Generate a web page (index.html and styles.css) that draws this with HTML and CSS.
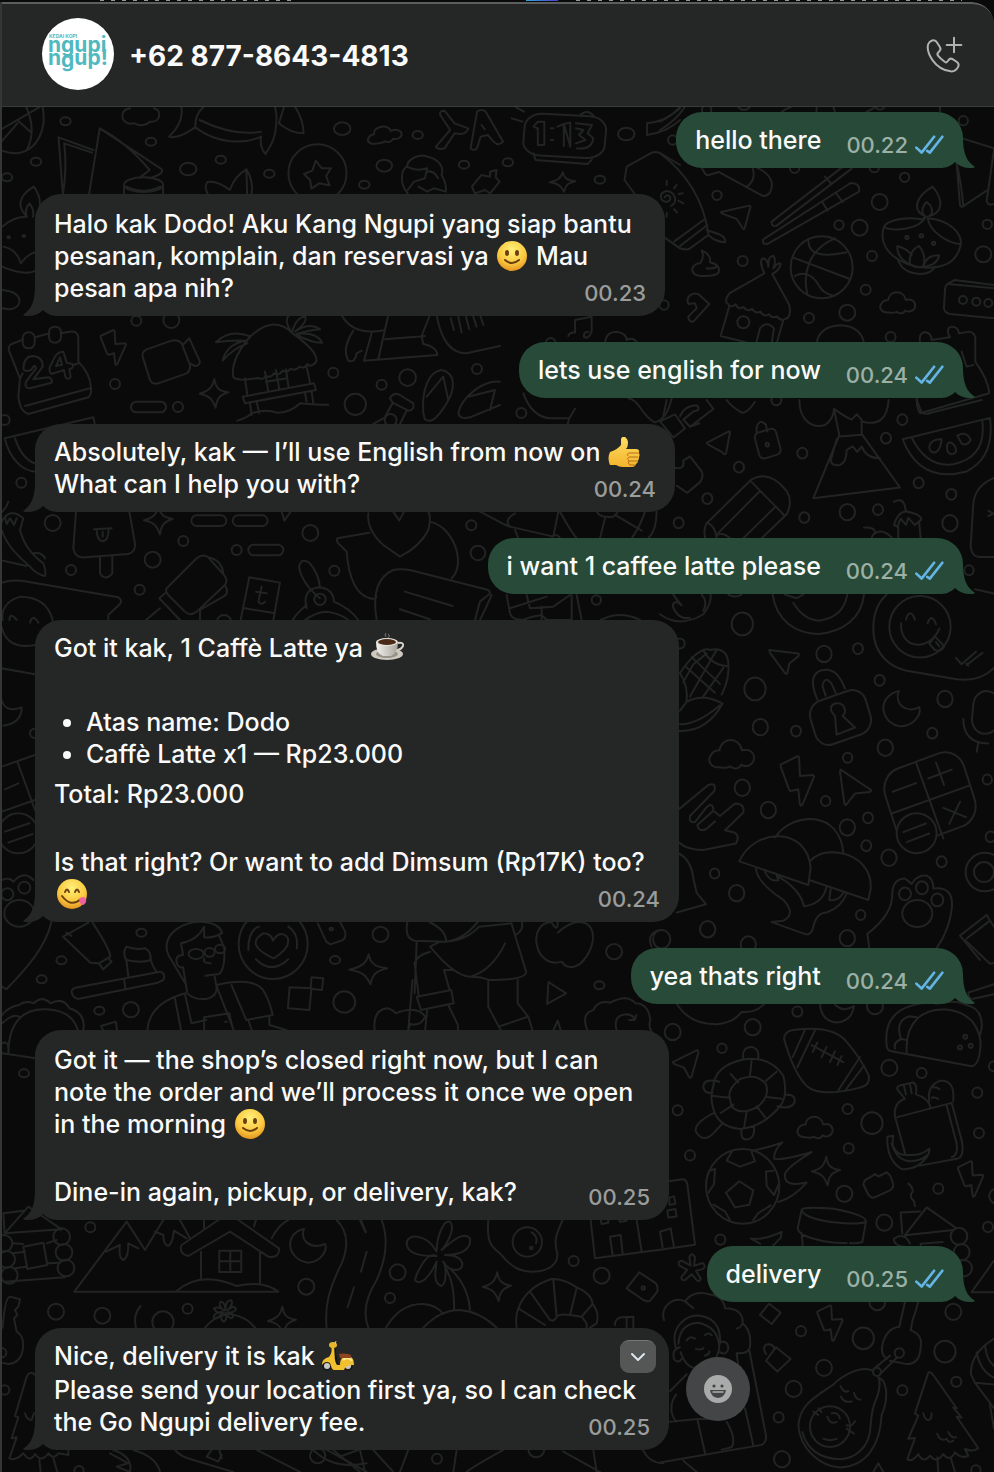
FILE: index.html
```html
<!DOCTYPE html>
<html lang="id">
<head>
<meta charset="utf-8">
<meta name="viewport" content="width=device-width, initial-scale=1">
<title>+62 877-8643-4813</title>
<link rel="stylesheet" href="styles.css">
</head>
<body>

<!-- shared shapes -->
<svg class="sprites" width="0" height="0" aria-hidden="true">
  <defs>
    <radialGradient id="face" cx="50%" cy="30%" r="75%">
      <stop offset="0" stop-color="#fff07a"/>
      <stop offset="0.6" stop-color="#fbc93f"/>
      <stop offset="1" stop-color="#e08a1c"/>
    </radialGradient>
    <linearGradient id="thumb" x1="0" y1="0" x2="0" y2="1">
      <stop offset="0" stop-color="#ffdf62"/>
      <stop offset="1" stop-color="#f3b32d"/>
    </linearGradient>
    <linearGradient id="cup" x1="0" y1="0" x2="1" y2="0">
      <stop offset="0" stop-color="#f3f1ec"/>
      <stop offset="1" stop-color="#a9a59c"/>
    </linearGradient>
  </defs>

  <symbol id="tail" viewBox="0 0 36 30">
    <path d="M12 0C12 14 9 23 0 29C1 30 3 30 5 30C11 30 16 28 20 24C25 29 30 30 36 30V0Z"/>
  </symbol>
  <symbol id="ticks" viewBox="767 403 88 60">
    <path d="M771 441L787 456L825 408M804 451L812 456L850 408"/>
  </symbol>

  <symbol id="smile" viewBox="0 0 34 30">
    <circle cx="17" cy="15" r="15" fill="url(#face)"/>
    <ellipse cx="12" cy="12" rx="2" ry="3" fill="#6b3f10"/>
    <ellipse cx="22" cy="12" rx="2" ry="3" fill="#6b3f10"/>
    <path d="M10 19Q17 25 24 19" fill="none" stroke="#6b3f10" stroke-width="2" stroke-linecap="round"/>
  </symbol>
  <symbol id="yum" viewBox="0 0 34 30">
    <circle cx="18" cy="15" r="15" fill="url(#face)"/>
    <path d="M11 13Q13 8 15 13M21 13Q23 8 25 13" fill="none" stroke="#6b3f10" stroke-width="2" stroke-linecap="round"/>
    <path d="M8 17Q17 29 27 20" fill="none" stroke="#6b3f10" stroke-width="2" stroke-linecap="round"/>
    <path d="M25 20Q29 16 32 20Q33 24 29 26Q26 26 25 20Z" fill="#f2609e"/>
  </symbol>
  <symbol id="thumbs-up" viewBox="0 0 34 30">
    <path d="M3 15Q10 13 14 8L14 2Q15 -1 18 0Q21 2 21 6Q21 10 19 12H29Q33 12 32 16Q33 18 32 20Q32 22 31 24Q31 26 29 27Q28 30 25 30H16Q12 30 9 28L3 28Q0 21 3 15Z" fill="url(#thumb)"/>
    <path d="M32 16H22Q19 17 21 19M31 20H22Q19 21 22 24M31 24H22Q20 26 23 28L28 28" fill="none" stroke="#b96f17" stroke-width="1"/>
  </symbol>
  <symbol id="coffee" viewBox="0 0 34 30">
    <path d="M16 4Q14 2 16 0M18 5Q21 3 18 1" fill="none" stroke="#777" stroke-width="1"/>
    <ellipse cx="17" cy="21" rx="16" ry="6" fill="#cfcac0"/>
    <ellipse cx="17" cy="21" rx="11" ry="4" fill="#96928a"/>
    <path d="M28 10Q34 9 33 13Q31 17 26 17" fill="none" stroke="#d4d0c8" stroke-width="2"/>
    <path d="M6 9Q6 21 13 23H21Q28 20 28 9Z" fill="url(#cup)"/>
    <ellipse cx="17" cy="9" rx="11" ry="4" fill="#e7e3db"/>
    <ellipse cx="17" cy="9" rx="9" ry="3" fill="#4a2a17"/>
  </symbol>
  <symbol id="scooter" viewBox="0 0 34 30">
    <path d="M12 5L15 24" stroke="#151515" stroke-width="4"/>
    <circle cx="6" cy="25" r="5" fill="#1b1b1b"/>
    <circle cx="6" cy="25" r="3" fill="#c9c9c9"/>
    <circle cx="27" cy="25" r="5" fill="#1b1b1b"/>
    <circle cx="27" cy="25" r="3" fill="#c9c9c9"/>
    <path d="M10 5L13 6C14 13 13 20 16 24H19C19 18 22 15 26 15C31 15 33 18 33 24C29 24 24 25 23 29H13C11 29 10 25 9 22C6 20 3 21 1 24C1 19 4 17 8 16C11 12 11 9 10 5Z" fill="#f0c02f"/>
    <path d="M22 19C25 16 29 17 31 20" fill="none" stroke="#ffe98c" stroke-width="2"/>
    <path d="M18 13Q23 12 27 13L30 14V17L19 17Z" fill="#8d4422"/>
    <ellipse cx="12" cy="4" rx="4" ry="3" fill="#e8b62b"/>
    <path d="M14 3L15 0" stroke="#ccc" stroke-width="1"/>
  </symbol>

  <symbol id="cloud" class="doodle" viewBox="0 0 120 80" overflow="visible">
    <path d="M30 74C8 76 0 58 10 46C16 36 26 36 30 36C34 6 78 4 84 36C104 30 116 44 112 58C108 72 90 74 82 68C76 80 62 78 56 72C48 76 40 76 30 74Z"/>
  </symbol>
  <symbol id="spark" class="doodle" viewBox="0 0 90 90" overflow="visible">
    <path d="M46 2C50 28 60 38 88 42C62 50 54 60 50 88C40 62 32 52 2 46C30 38 40 28 46 2Z"/>
  </symbol>
  <symbol id="bolt" class="doodle" viewBox="0 0 80 110" overflow="visible">
    <path d="M2 20L40 2Q44 2 44 6L46 44L76 42Q79 44 77 48L52 104Q48 110 46 104L42 72L26 76Q22 76 21 72L2 24Z"/>
  </symbol>
</svg>

<div class="backdrop"></div>

<div class="window">
  <header class="topbar">
    <svg class="avatar" viewBox="0 0 72 72" role="img" aria-label="Kedai Kopi Ngupi Ngupi">
      <circle cx="36" cy="36" r="36" fill="#fff"/>
      <g fill="#4fb9bf" font-family="Inter, sans-serif" font-weight="700">
        <text x="7" y="20" font-size="5">KEDAI KOPI</text>
        <text x="6" y="34" font-size="21">ngupi</text>
        <text x="6" y="47" font-size="21">n<tspan dy="2">g</tspan><tspan dy="-2">up!</tspan></text>
      </g>
    </svg>
    <h1 class="contact">+62 877-8643-4813</h1>
    <button class="call" type="button" aria-label="Call">
      <svg viewBox="798 105 111 111">
        <path d="M803 138C803 126 812 118 821 118C826 118 829 121 832 126L840 139C843 144 841 149 836 153C831 157 831 160 834 164C840 172 848 178 855 183C859 186 862 183 865 178C869 172 874 172 879 175L891 183C896 187 897 191 895 196C890 207 882 212 872 211C850 208 830 195 818 178C808 164 803 150 803 138Z"/>
        <path d="M882 110V154M860 132H904"/>
      </svg>
    </button>
  </header>

  <main class="chat">
    <!-- doodle wallpaper -->
    <svg class="wallpaper doodle" viewBox="2 107 992 1365" preserveAspectRatio="xMinYMin slice" aria-hidden="true">
      <!-- top left -->
      <g transform="translate(0 100) scale(.4337 .3333)">
        <path d="M98 20C108 80 90 150 40 160Q20 160 0 150M60 20Q85 90 62 150M0 90L90 22M0 130L40 70M40 60L70 95"/>
        <circle cx="151" cy="64" r="12"/><circle cx="348" cy="125" r="12"/><circle cx="83" cy="185" r="12"/>
        <circle cx="16" cy="232" r="12"/><circle cx="434" cy="207" r="19"/><circle cx="509" cy="179" r="12"/>
        <circle cx="789" cy="86" r="19"/><circle cx="963" cy="105" r="12"/><circle cx="886" cy="197" r="18"/>
        <circle cx="621" cy="221" r="12"/><circle cx="840" cy="254" r="12"/><circle cx="1070" cy="194" r="12"/>
        <circle cx="1171" cy="187" r="12"/><circle cx="1383" cy="239" r="12"/><circle cx="1444" cy="102" r="19"/>
        <path d="M300 25C270 30 280 80 310 70C320 80 340 75 345 65C370 70 375 30 355 25"/>
        <path d="M205 285L230 85L370 205Q380 215 365 225L345 235M230 85Q290 125 345 210L325 230M145 285L135 112L215 150M145 285Q155 200 148 130L212 158"/>
        <ellipse cx="331" cy="254" rx="45" ry="22"/>
        <path d="M286 254V285M376 254V285M292 260Q330 285 370 260"/>
        <path d="M418 20Q425 65 390 110Q410 118 450 82C500 130 560 135 602 110Q598 140 612 162Q635 120 636 82Q640 50 634 20M450 82Q450 40 470 20M460 60Q540 110 602 95M680 20Q700 60 700 100Q670 100 643 70L655 20"/>
        <path d="M480 285Q470 260 478 246Q500 240 530 270Q540 230 568 208Q585 240 580 285M568 208L570 285"/>
        <ellipse cx="732" cy="220" rx="67" ry="87"/>
        <path d="M728 182L742 205L763 205L752 228L760 256L736 250L718 266L715 240L701 222L720 212Z"/>
        <use href="#cloud" x="840" y="60" width="90" height="80" transform="rotate(-14 885 100)"/>
        <path d="M940 280C920 250 925 210 938 200C940 175 970 160 985 170C1010 175 1025 200 1018 225Q1030 250 1028 275L1000 265L985 275L965 260M938 200Q960 215 985 205L980 235L955 245L940 270M985 215Q1000 210 1010 235"/>
        <path d="M1005 140L1038 90L1015 45Q1012 32 1025 32L1048 70L1080 85Q1075 108 1048 100L1025 145Q1010 150 1005 140ZM1085 145L1100 35Q1110 25 1120 35L1160 125Q1150 140 1138 125L1125 105L1108 110L1100 145Q1092 155 1085 145ZM1110 75L1118 88"/>
        <rect x="1208" y="45" width="188" height="125" rx="40" transform="rotate(4 1300 108)"/>
        <path d="M1230 160L1235 180L1355 192L1365 178M1338 45Q1355 25 1370 50M1180 55L1205 65M1190 22L1208 35"/>
        <path d="M1240 135V85L1230 80L1240 65H1255V135ZM1270 85h6M1270 120h6M1300 138V72L1285 80M1300 72L1315 68V140ZM1328 70L1365 75L1355 100L1368 115Q1365 150 1330 145M1328 85L1345 90L1335 105L1350 120L1328 130"/>
        <path d="M1095 280L1088 260L1110 225L1130 230V215L1145 210L1143 232L1152 245L1130 280L1118 270Z"/>
        <use href="#spark" x="1266" y="210" width="62" height="72"/>
        <path d="M1440 240L1445 200L1500 160Q1515 150 1530 165L1568 195M1440 240L1465 285M1492 70Q1535 65 1568 25M1492 70V105Q1540 95 1568 60"/>
        <path d="M62 350C40 320 40 290 78 260Q100 300 88 340M62 350Q55 330 68 310Q80 330 76 350M5 380Q30 350 62 350M5 500Q60 530 85 510"/>
        <circle cx="20" cy="412" r="3"/><circle cx="55" cy="408" r="3"/>
        <path d="M8 440Q40 450 48 490Q65 460 85 455M5 570Q45 575 45 605Q40 635 5 625"/>
      </g>

      <!-- top right -->
      <g transform="translate(660 0) scale(.3333)">
        <circle cx="140" cy="330" r="14"/><circle cx="910" cy="362" r="14"/><circle cx="404" cy="505" r="14"/>
        <circle cx="643" cy="503" r="14"/><circle cx="734" cy="532" r="14"/><circle cx="171" cy="586" r="14"/>
        <circle cx="659" cy="606" r="24"/><circle cx="537" cy="675" r="14"/><circle cx="599" cy="683" r="24"/>
        <circle cx="982" cy="673" r="14"/><circle cx="248" cy="783" r="15"/><circle cx="636" cy="768" r="15"/>
        <circle cx="970" cy="763" r="24"/><circle cx="617" cy="869" r="15"/><circle cx="562" cy="938" r="24"/>
        <circle cx="447" cy="954" r="15"/><circle cx="692" cy="1011" r="15"/><circle cx="12" cy="915" r="14"/>
        <circle cx="38" cy="420" r="14"/><circle cx="252" cy="310" r="20"/><circle cx="660" cy="315" r="14"/>
        <path d="M0 390Q50 360 75 320M0 365Q40 345 60 320M365 336Q380 325 395 320M470 320V336M520 320L525 336M620 336L650 320M840 320V336"/>
        <path d="M0 460C80 520 130 600 145 700M14 592q8-12 16-2q4 14-12 16q-20-4-14-24q16-18 36 0q14 24-6 36M20 555V543M42 565L50 555M56 582L68 580M55 602L70 610M42 628L52 638M20 638V650"/>
        <path d="M10 710L60 745Q80 752 90 745L145 705Q165 725 195 727Q200 712 175 702L140 690M42 725L135 657M60 738L142 675"/>
        <path d="M183 636L268 617Q272 617 271 622L254 685Q251 690 248 685L230 657L185 640Z"/>
        <path d="M125 503L136 522Q140 527 146 525L176 516L308 588Q335 590 336 550Q330 520 290 503M278 505Q290 540 258 562"/>
        <path d="M335 665L545 503M350 677L575 506M335 665Q335 682 350 677M495 530L515 552M310 718L572 549Q602 550 597 575L320 733Q305 732 310 718ZM488 608L503 632M530 582L548 606"/>
        <path d="M797 650C752 630 770 588 818 560C852 600 850 640 803 650M797 650C782 640 785 620 800 606C820 620 822 645 803 650"/>
        <path d="M797 650Q790 660 780 657C720 650 680 665 672 680C690 697 780 690 797 650M803 655C810 695 860 728 903 733M803 655C870 660 905 700 903 733C890 790 850 803 800 803C720 800 650 750 672 680"/>
        <circle cx="741" cy="712" r="5"/><circle cx="784" cy="707" r="5"/><circle cx="821" cy="730" r="5"/>
        <path d="M750 793Q710 775 712 738Q740 745 755 765M750 793Q745 755 777 738Q800 765 790 798M790 798Q775 808 750 793M790 798Q800 765 838 766Q830 798 790 800M715 783Q730 820 780 822Q815 822 825 800"/>
        <circle cx="485" cy="802" r="93"/>
        <path d="M400 773L570 837M445 722C445 765 490 772 560 757M525 715C440 750 428 830 443 886M405 828C440 808 465 835 480 862Q490 880 522 888"/>
        <path d="M125 752Q155 765 150 787Q182 795 176 817Q170 829 130 828Q95 828 97 805Q105 790 120 790Q135 770 125 752M140 805Q160 808 172 800"/>
        <path d="M313 820L208 880Q190 905 205 913q10 12 22 0q8 18 24 8q10 16 26 6q10 16 24 8q12 18 26 8q10 14 24 6q12 16 24 8Q395 955 388 915L337 822M313 820Q295 780 310 775Q325 780 325 800Q325 765 340 768Q350 780 340 805Q355 785 362 792Q360 810 337 822M208 918L182 1008L290 1035M370 960L350 1030M290 1025L300 985Q320 960 342 985L335 1030"/>
        <circle cx="250" cy="967" r="18"/>
        <path d="M82 900Q90 875 115 882L148 912L100 965Q85 965 85 950L110 925L105 910L85 912Z"/>
        <use href="#cloud" x="655" y="864" width="118" height="80"/>
        <path d="M1002 855L885 840L865 850Q855 855 855 870L852 925Q855 940 870 942L1002 955M865 852L1002 865"/>
        <circle cx="909" cy="900" r="12"/><circle cx="949" cy="905" r="12"/><circle cx="985" cy="909" r="12"/>
        <path d="M470 1028Q480 978 542 976Q600 978 612 1028M780 1028Q775 1000 795 996Q815 1000 815 1020L870 1012Q855 985 875 980Q895 980 897 1000L930 995Q945 1000 946 1015V1085Q985 1140 988 1180L780 1240Q770 1225 770 1195M905 1055L920 1100L940 1095"/>
        <path d="M890 410L1002 445M890 490L900 615Q905 625 915 615L980 572M1002 450L980 605Q985 618 1002 612M893 500Q905 560 910 615"/>
      </g>

      <!-- left, calendar to price tag -->
      <g transform="translate(0 300) scale(.3333)">
        <circle cx="409" cy="62" r="15"/><circle cx="514" cy="60" r="24"/><circle cx="345" cy="252" r="15"/>
        <circle cx="534" cy="321" r="15"/><circle cx="1000" cy="218" r="15"/><circle cx="1145" cy="254" r="15"/>
        <circle cx="1223" cy="233" r="25"/><circle cx="1066" cy="313" r="32"/><circle cx="1431" cy="207" r="15"/>
        <circle cx="14" cy="360" r="15"/><circle cx="64" cy="548" r="15"/><circle cx="158" cy="669" r="24"/>
        <circle cx="213" cy="810" r="15"/><circle cx="458" cy="779" r="24"/><circle cx="550" cy="723" r="15"/>
        <circle cx="710" cy="750" r="15"/><circle cx="931" cy="699" r="24"/><circle cx="1003" cy="812" r="15"/>
        <circle cx="1414" cy="676" r="15"/><circle cx="1434" cy="759" r="22"/><circle cx="419" cy="869" r="15"/>
        <circle cx="672" cy="967" r="22"/>
        <path d="M70 118L35 132Q25 138 26 150L60 235L55 290Q60 335 85 342L265 292Q275 285 273 262Q270 220 235 185V110Q230 92 210 95L182 100M105 112L148 100M75 318L270 265M62 232L68 220M235 190L222 195"/>
        <rect x="68" y="97" width="36" height="48" rx="17"/><rect x="147" y="80" width="36" height="48" rx="17"/>
        <path d="M70 205Q72 168 100 168Q130 172 128 200L100 238L145 232Q158 235 155 248L90 265Q72 265 78 245L108 205Q105 190 95 208Q75 220 70 205ZM165 170Q175 155 190 155L200 188L218 192Q222 205 208 208L212 232Q202 242 196 230L192 210L155 222Q145 215 150 200ZM180 172L168 198L186 194Z"/>
        <use href="#bolt" x="300" y="88" width="80" height="110"/>
        <path d="M428 170Q425 155 440 148L515 122Q535 118 545 130L570 195Q572 212 560 220L475 250Q458 255 450 240ZM548 135L568 115L600 185Q598 198 585 198L570 190"/>
        <path d="M752 108Q790 75 815 74Q850 72 875 98Q920 130 940 155Q958 185 942 192q-12 10-20 0q-8 16-24 8q-10 14-26 6q-10 14-24 6q-10 16-26 8q-10 16-24 8q-10 14-24 6Q715 245 700 232Q690 180 752 108M752 110Q690 85 648 127Q690 120 740 122Q680 130 668 182Q700 145 742 130M875 98Q850 60 868 45M875 98Q890 50 915 50Q925 65 885 95Q930 65 960 88Q930 90 890 102Q950 95 967 128Q940 130 890 105M728 290L942 250L948 270L735 310ZM735 235L742 285M920 200L930 248M795 215L805 275M828 210L838 268M858 208L866 262M798 245L862 235M750 310L755 345M770 305L778 340M915 278L920 305M935 275L940 308M712 362Q740 355 755 340Q800 325 830 338Q870 340 900 310Q940 315 985 314"/>
        <use href="#spark" x="597" y="235" width="90" height="90"/>
        <rect x="393" y="305" width="105" height="32" rx="16"/><rect x="574" y="646" width="105" height="32" rx="16"/>
        <rect x="698" y="646" width="105" height="32" rx="16"/><rect x="745" y="734" width="105" height="32" rx="16"/>
        <path d="M1025 45Q1060 110 1155 90M1165 45L1135 178M1060 92Q1025 145 1045 182Q1065 190 1070 160L1085 152M1115 100L1092 182L1312 165Q1310 140 1270 132L1265 108L1290 45M1155 118L1275 108M1310 45Q1330 160 1400 160L1500 138M1352 55L1362 90M1375 50L1385 98M1398 50L1408 88M1420 50L1430 80M1442 50L1450 75"/>
        <path d="M1170 295Q1180 275 1200 285L1240 310Q1245 330 1225 332L1178 308ZM1178 310L1155 350M1220 332L1200 372M1120 372L1155 352"/>
        <circle cx="1172" cy="360" r="18"/>
        <path d="M1270 340C1265 270 1285 215 1325 210C1370 220 1365 270 1340 310C1310 360 1290 370 1275 358ZM1280 290L1330 230L1345 300M1375 340C1385 290 1450 240 1500 245M1375 340Q1380 360 1410 352L1500 315M1405 290L1485 270L1470 330"/>
        <path d="M14 415L280 352L285 375M14 415C30 480 70 515 110 515M45 415C60 460 85 485 110 492"/>
        <path d="M0 640Q20 625 25 605M5 665Q30 620 70 655L60 690Q75 750 130 790Q140 820 135 828Q110 825 85 795Q20 740 5 690M15 650L20 672L30 655L42 675L50 655M100 760Q125 755 135 775M0 780L80 798"/>
        <path d="M228 635L220 745Q225 775 255 772L385 762Q408 755 405 730L388 635M300 772V820Q315 845 337 820V768M282 688L335 685M290 688Q290 722 308 724Q326 722 326 686M308 695V710"/>
        <use href="#spark" x="430" y="615" width="90" height="90"/>
        <path d="M0 850Q30 838 70 843L355 892Q368 900 360 912L325 945V960"/>
        <path d="M8 960Q0 910 60 890Q140 890 158 960Q155 1010 120 1035M28 960Q30 935 50 960M90 968Q98 940 115 968"/>
        <path d="M500 865L590 775Q608 760 625 772L672 825Q685 840 675 855L590 935Q570 950 555 935L505 885Q495 875 500 865ZM478 895L495 880M478 895L540 960M625 772Q665 780 670 820M675 855Q690 880 670 890L600 930V960M438 960L480 925"/>
        <path d="M748 832L840 848L820 960M748 832L722 960M735 925L825 940M785 860L775 905Q785 918 795 905M768 875L800 880"/>
        <path d="M960 895Q905 850 897 800Q905 770 930 790Q955 820 960 860M920 925Q905 870 955 862Q1000 865 1002 905Q1050 925 1075 960M920 915Q890 940 878 960M915 960Q950 935 980 935Q1020 940 1045 960"/>
        <circle cx="960" cy="898" r="17"/>
        <path d="M1105 640Q1100 690 1150 735L1200 770Q1260 740 1285 690Q1295 650 1285 635M1180 635L1198 662L1212 635M1108 698L1012 715Q1008 722 1015 730L1040 755Q1050 880 1110 895Q1125 900 1130 890M1290 665C1360 680 1400 790 1355 835M1130 960Q1110 840 1180 810Q1200 805 1230 810L1465 870Q1475 880 1465 885L1440 905L1425 960M1215 875L1358 918M1200 928L1290 958"/>
        <path d="M845 635L853 662L872 635"/>
      </g>

      <!-- middle -->
      <g transform="translate(480 330) scale(.3333)">
        <circle cx="124" cy="249" r="15"/><circle cx="212" cy="38" r="14"/><circle cx="349" cy="810" r="14"/>
        <path d="M265 18Q270 5 285 8V-30L335-40V5Q325 30 312 20Q310 5 325 5M375 36Q380 5 410 5Q440 10 440 30Q460 20 470 36"/>
        <path d="M130 190Q155 260 210 265H268L285 236M268 265L262 285M445 205C480 210 485 260 525 277Q560 270 575 205"/>
        <path d="M0 545C50 570 80 590 90 590Q70 570 105 550M90 590L220 620L235 545M105 600L115 625M240 545Q270 600 290 625M350 545Q360 565 400 560L412 548M375 565L360 625M405 555L485 602M495 545Q480 590 455 625M530 545Q530 600 505 625M215 620Q235 610 240 625"/>
        <path d="M80 795L90 850Q95 870 130 870Q150 860 185 855L200 870H275V795M90 835L200 800M140 795L150 835L220 830L270 795M185 830V870M290 795L305 870M0 870Q20 830 35 795M362 870Q420 840 480 870"/>
      </g>

      <!-- right, volcano to paw -->
      <g transform="translate(660 400) scale(.3333 .3571)">
        <circle cx="727" cy="55" r="15"/><circle cx="678" cy="107" r="15"/><circle cx="427" cy="149" r="15"/>
        <circle cx="237" cy="188" r="15"/><circle cx="142" cy="276" r="15"/><circle cx="56" cy="344" r="15"/>
        <circle cx="433" cy="329" r="15"/><circle cx="562" cy="314" r="23"/><circle cx="654" cy="307" r="15"/>
        <circle cx="776" cy="232" r="15"/><circle cx="874" cy="264" r="15"/><circle cx="870" cy="345" r="23"/>
        <circle cx="927" cy="477" r="14"/><circle cx="349" cy="0" r="15"/><circle cx="247" cy="627" r="32"/>
        <circle cx="492" cy="711" r="23"/><circle cx="594" cy="696" r="15"/><circle cx="285" cy="809" r="32"/>
        <circle cx="659" cy="785" r="15"/><circle cx="855" cy="837" r="23"/><circle cx="301" cy="916" r="23"/>
        <circle cx="408" cy="927" r="15"/><circle cx="817" cy="933" r="15"/><circle cx="676" cy="974" r="23"/>
        <circle cx="563" cy="1002" r="14"/><circle cx="982" cy="1063" r="14"/><circle cx="247" cy="1086" r="23"/>
        <circle cx="497" cy="1123" r="14"/><circle cx="325" cy="1148" r="23"/><circle cx="624" cy="1170" r="15"/>
        <circle cx="562" cy="1197" r="23"/><circle cx="619" cy="1248" r="15"/><circle cx="687" cy="1282" r="23"/>
        <circle cx="845" cy="1293" r="15"/><circle cx="992" cy="1223" r="15"/><circle cx="164" cy="1326" r="14"/>
        <circle cx="230" cy="1381" r="23"/><circle cx="602" cy="1442" r="14"/><circle cx="143" cy="1482" r="23"/>
        <circle cx="562" cy="1507" r="23"/><circle cx="265" cy="1525" r="23"/><circle cx="60" cy="682" r="14"/>
        <circle cx="5" cy="1510" r="26"/>
        <path d="M0 60L40 105L75 80L45 40L0 60M20 0L10 45M140 120L208 87Q212 92 208 100L198 150Q192 155 185 145L145 125ZM90 75L160 25L140 0M60 45Q75 15 110 15Q125 28 100 32L70 55L90 75L118 65M45 190Q75 195 70 170L90 158L125 200Q132 215 120 230L82 260L50 240"/>
        <rect x="290" y="85" width="66" height="75" rx="14" transform="rotate(-16 322 122)"/>
        <circle cx="322" cy="125" r="5"/>
        <path d="M290 95V75Q300 50 318 70L322 88M200 0Q215 20 245 35Q260 40 285 5"/>
        <path d="M418 0C418 60 460 80 495 70Q520 55 522 25L538 98L460 275L720 245L605 95V55L590 40L575 55Q560 50 522 25M605 60Q680 80 686 0M538 102L605 97M530 110L512 170Q515 185 540 182Q560 175 560 140L578 130L592 145L605 130Q620 165 660 163"/>
        <path d="M770 0L785 35Q800 42 815 35L965 0"/>
        <path d="M728 110L990 50Q1005 160 920 200Q780 235 728 110ZM755 105Q800 190 880 180Q980 160 967 60M808 130Q815 108 845 110Q840 148 820 147Q808 145 808 130ZM862 125Q870 110 885 130Q895 150 875 152Q858 150 862 125ZM892 100Q920 85 932 112Q920 130 905 122Z"/>
        <path d="M135 385Q130 360 140 345L275 222Q330 195 380 255Q400 285 380 320L305 387M275 230L375 325M300 255L175 372M345 300L250 387M145 345Q165 355 170 385M170 378Q190 370 210 387"/>
        <path d="M702 285Q735 270 737 312M702 350Q715 310 740 312Q785 320 784 335L765 350L745 330L738 350L722 332L712 355ZM715 355V387M778 345L782 387M612 357Q645 355 645 372Q670 360 695 385M635 387Q640 372 650 372"/>
        <path d="M1002 218Q945 240 940 290L932 410Q935 440 960 440H1002M985 310L1000 318L985 325"/>
        <path d="M0 600Q60 640 130 600Q155 570 152 545M40 545Q50 560 65 575L50 565Q30 570 45 590Q60 615 90 610M125 545Q145 565 130 590M205 545Q225 555 245 545"/>
        <path d="M338 545C350 620 410 655 475 655C550 650 605 610 612 545M400 568Q430 615 475 618Q550 610 562 545M375 545L410 555L430 545"/>
        <path d="M680 545C650 570 640 600 640 640C640 720 700 750 740 758L890 782Q960 790 1002 750M945 530L1002 542"/>
        <ellipse cx="780" cy="635" rx="92" ry="86"/>
        <path d="M738 615Q750 580 765 615M803 625Q815 595 828 628M723 625C720 700 810 705 838 640M808 683L825 662L853 690Q840 708 825 700ZM828 678L838 690M888 722L905 740L948 705M920 742L968 708M925 744L920 738"/>
        <path d="M60 765C90 720 130 690 150 700Q200 690 205 735Q210 780 185 825M130 700Q150 740 200 745M95 720L180 795M75 745L165 820M70 790L100 740L140 710M90 830L145 740L170 700M130 830L190 750M60 765Q85 800 80 845L60 870M80 845Q130 820 188 850Q140 930 58 927M60 908Q110 910 180 855"/>
        <path d="M328 700L415 710Q420 715 412 720L388 738L382 765Q378 770 373 762L330 708Z"/>
        <rect x="455" y="825" width="174" height="128" rx="42" transform="rotate(-18 542 890)"/>
        <path d="M472 838Q440 770 485 757Q530 745 555 808M497 828L487 800Q495 770 515 795L527 820M525 885Q500 860 525 850Q555 845 555 875L548 885L585 917L530 937Z"/>
        <path d="M717 815C650 830 660 900 715 913C760 918 785 880 778 860C740 880 700 850 717 815Z"/>
        <rect x="938" y="815" width="80" height="120" rx="40" transform="rotate(6 978 875)"/>
        <path d="M910 893Q910 960 985 962M955 960L950 985"/>
        <use href="#cloud" x="138" y="936" width="156" height="100"/>
        <use href="#bolt" x="356" y="995" width="112" height="145"/>
        <path d="M542 1035L630 1090Q638 1095 628 1098L585 1102L560 1132Q555 1138 553 1128L540 1040Z"/>
        <rect x="685" y="1005" width="250" height="216" rx="60" transform="rotate(-19 810 1113)"/>
        <path d="M768 1015L850 1228M695 1158L928 1080M698 1097L768 1073M805 1060L875 1035M828 1015L852 1078M850 1142L918 1168M900 1125L868 1187"/>
        <ellipse cx="770" cy="1213" rx="60" ry="56" fill="#0a0a0a"/>
        <path d="M730 1210L798 1186M740 1238L808 1214"/>
        <path d="M58 1145L145 1078Q170 1070 163 1095L90 1165Q85 1185 105 1182L140 1140Q160 1125 160 1150L112 1190Q115 1210 138 1202L165 1180M160 1150L180 1165L225 1130Q255 1130 250 1155L195 1205L225 1212Q240 1220 228 1242L130 1260Q80 1260 58 1240"/>
        <path d="M345 1225C400 1150 540 1150 550 1268M238 1292C280 1200 440 1190 452 1310L445 1358ZM452 1290C500 1240 640 1270 632 1370L625 1400L450 1345M288 1312Q290 1350 370 1400Q410 1440 370 1458L335 1462L440 1497Q455 1497 460 1475Q470 1435 500 1435Q545 1420 560 1382M315 1322Q330 1350 355 1345L350 1330M355 1335Q420 1370 432 1418Q490 1410 500 1362M512 1370L508 1400Q535 1405 550 1380"/>
        <path d="M58 1270Q95 1290 100 1340L110 1380L138 1412L50 1435"/>
        <ellipse cx="975" cy="1322" rx="58" ry="54"/><ellipse cx="972" cy="1322" rx="30" ry="28"/>
        <path d="M628 1535L622 1495Q700 1440 697 1380Q700 1340 735 1340L755 1355Q770 1330 800 1332Q820 1340 820 1368Q880 1360 876 1420Q870 1480 830 1535"/>
        <circle cx="735" cy="1383" r="18"/><circle cx="786" cy="1366" r="18"/><circle cx="832" cy="1400" r="18"/>
        <ellipse cx="772" cy="1438" rx="45" ry="38"/>
        <path d="M980 1442L900 1500L960 1568M980 1442L1002 1475M920 1508L990 1458"/>
      </g>

      <!-- strip left of the order -->
      <g transform="translate(0 620) scale(.3333)">
        <path d="M5 20Q20 90 105 75M5 145L105 163M5 240Q15 280 65 262Q65 310 10 317M5 440L105 405M52 425L105 570M5 575L105 540M15 508L55 490"/>
        <circle cx="104" cy="340" r="14"/><circle cx="55" cy="640" r="60"/>
        <path d="M15 635L88 610M25 668L98 642M5 780Q30 770 40 785Q70 750 100 780"/>
        <circle cx="22" cy="823" r="18"/><circle cx="73" cy="803" r="18"/><ellipse cx="58" cy="880" rx="45" ry="40"/>
      </g>

      <!-- barista and latte -->
      <g transform="translate(0 880) scale(.4209 .3333)">
        <circle cx="336" cy="158" r="12"/><circle cx="146" cy="241" r="12"/><circle cx="99" cy="298" r="12"/>
        <circle cx="236" cy="392" r="12"/><ellipse cx="311" cy="389" rx="19" ry="23"/><circle cx="796" cy="240" r="12"/>
        <ellipse cx="904" cy="163" rx="19" ry="23"/><ellipse cx="818" cy="366" rx="26" ry="32"/><ellipse cx="1459" cy="215" rx="19" ry="23"/>
        <circle cx="1424" cy="316" r="12"/><circle cx="57" cy="580" r="12"/>
        <path d="M122 126C110 200 60 270 15 328L5 320M150 170L210 128M150 170L215 248L235 250L262 230Q262 210 220 128M158 158L170 168M235 250L245 268L265 245L258 235"/>
        <path d="M170 335Q170 325 185 322L380 275Q395 280 388 300L375 308L185 357Q172 352 170 335ZM295 300L298 325M305 290L300 240Q290 220 300 200Q320 210 345 205Q360 215 358 240Q365 265 372 275M300 240Q335 250 358 240"/>
        <path d="M440 310L400 225C380 160 440 120 485 126Q520 130 528 158Q510 175 485 172V140Q470 180 430 190L435 225Q415 225 420 250Q425 265 435 262L445 340Q460 360 490 357Q515 350 515 325L510 290M520 165L533 205Q535 270 520 282L488 287M485 235Q480 250 500 250"/>
        <ellipse cx="466" cy="222" rx="18" ry="15"/><ellipse cx="498" cy="217" rx="12" ry="13"/><ellipse cx="523" cy="207" rx="12" ry="13"/>
        <path d="M350 450Q355 370 440 340M415 352L430 450M440 345L455 430L490 420M515 320L555 450M515 315Q600 290 625 330Q640 360 648 405L585 420L550 315M590 420L598 450M640 410V435L680 450M485 450V412L545 400L552 440M535 425h4"/>
        <ellipse cx="649" cy="192" rx="82" ry="105"/>
        <path d="M590 210Q590 150 615 140M705 205Q710 160 685 140M608 238Q645 285 685 238M650 235Q580 195 625 160Q645 160 648 182Q665 150 682 170Q695 200 650 235"/>
        <path d="M755 130L775 185L785 193L815 180Q823 170 820 155L808 126"/><circle cx="787" cy="147" r="4"/>
        <use href="#spark" x="828" y="207" width="94" height="122"/>
        <path d="M688 322L740 325L735 390L684 385ZM740 292L768 295L765 330L738 326Z"/>
        <path d="M968 126Q960 175 985 182L1060 185Q1100 180 1135 126M1020 126Q1060 150 1060 185M990 185L985 340M1022 200L1045 185L1060 185Q1110 180 1138 140L1215 130M1022 200Q1080 290 1118 290Q1170 270 1200 190M1215 130L1250 275Q1250 300 1160 300Q1145 290 1118 290M985 250Q990 225 1022 215M990 350L1072 330L1078 370L1000 390ZM1075 270H1055L1068 330M985 250L995 350M980 300L970 450M1160 300V380L1185 440L1255 410L1230 370V300M1185 440L1190 450M1255 410L1265 450M1015 390L1010 450M1065 375L1088 435V450M890 450Q885 390 920 385Q935 390 940 400Q990 375 1010 410Q1000 440 975 432L970 450"/>
        <path d="M1240 126Q1245 150 1225 165M1325 126Q1325 160 1310 126C1250 130 1270 270 1335 245Q1350 275 1380 250C1420 200 1420 120 1370 126Q1350 130 1325 158"/>
        <path d="M1303 306L1345 340L1300 372ZM1315 450L1325 422L1332 450M1395 450Q1380 400 1410 390Q1420 360 1450 368Q1490 340 1510 370Q1540 370 1545 420Q1540 440 1548 455M1465 450Q1455 405 1490 403Q1505 405 1508 420L1512 405M1508 420H1495M1548 200Q1535 160 1568 150"/>
        <path d="M5 405Q20 380 45 375Q60 360 80 370Q100 345 120 370Q150 350 165 385Q205 400 198 450M20 520C20 420 60 385 110 388Q170 390 185 450M5 520L85 535M5 490Q20 480 20 510M5 430Q30 400 45 410M245 450L240 438L275 425L278 450"/>
      </g>

      <!-- bottom right -->
      <g transform="translate(660 940) scale(.3333 .3393)">
        <circle cx="38" cy="271" r="24"/><circle cx="186" cy="319" r="14"/><circle cx="278" cy="257" r="24"/>
        <circle cx="412" cy="211" r="15"/><circle cx="645" cy="195" r="24"/><circle cx="688" cy="377" r="24"/>
        <circle cx="785" cy="392" r="15"/><circle cx="952" cy="450" r="15"/><circle cx="563" cy="498" r="15"/>
        <circle cx="53" cy="502" r="15"/><circle cx="636" cy="540" r="32"/><circle cx="566" cy="614" r="15"/>
        <circle cx="957" cy="569" r="15"/><circle cx="90" cy="635" r="15"/><circle cx="553" cy="748" r="24"/>
        <circle cx="835" cy="733" r="15"/><circle cx="673" cy="833" r="24"/><circle cx="984" cy="846" r="15"/>
        <circle cx="181" cy="883" r="15"/><circle cx="423" cy="1153" r="15"/><circle cx="610" cy="1174" r="32"/>
        <circle cx="880" cy="1096" r="24"/><circle cx="855" cy="1213" r="32"/><circle cx="492" cy="1261" r="24"/>
        <circle cx="401" cy="1323" r="24"/><circle cx="727" cy="1327" r="15"/><circle cx="889" cy="1302" r="15"/>
        <circle cx="356" cy="1407" r="15"/><circle cx="366" cy="1530" r="24"/><circle cx="652" cy="1067" r="24"/>
        <circle cx="1002" cy="372" r="15"/><circle cx="1010" cy="755" r="22"/><circle cx="948" cy="1562" r="14"/>
        <path d="M50 188Q90 250 170 248Q220 245 245 212Q290 215 312 188M480 190Q485 240 530 243Q575 240 582 195Q550 215 525 190M925 155L1002 130M925 155Q925 175 940 173L1002 160M915 0L990 70L1002 68"/>
        <path d="M38 360L110 325Q116 325 115 332L95 402Q90 410 86 402L72 376L42 365Z"/>
        <path d="M372 290Q375 268 400 265Q520 250 560 300Q600 345 627 400Q630 430 600 435Q480 465 440 430Q400 390 372 290ZM398 345L435 265M412 375L467 262M535 443L600 345M558 440L612 370M455 310L550 360M472 302L458 330M500 315L485 345M525 328L510 360M545 342L532 368"/>
        <path d="M160 430Q165 370 250 352Q330 340 370 400Q385 460 360 490Q310 550 240 557Q170 550 158 490Q150 460 160 430ZM210 470Q200 440 240 410Q290 390 318 425Q330 460 295 490Q240 520 215 490ZM212 395L235 420M275 355L270 400M350 388L318 415M365 468L320 463M315 522L290 490M252 555L260 505M182 510L220 485M160 460L210 465M250 350Q245 315 275 315Q300 320 294 352M178 418Q130 405 130 435Q135 455 158 450M375 455Q410 455 403 480Q390 500 352 490M165 508Q100 540 108 565Q130 600 160 570L188 540M245 557Q240 590 262 588Q285 585 282 550"/>
        <path d="M680 310Q670 220 750 195Q800 180 830 188Q890 175 915 190Q970 200 965 260L960 280M740 330C735 240 790 200 860 205Q950 215 962 300Q960 370 935 372L695 328Q680 325 680 310M722 290Q705 235 750 225L770 228M705 320Q700 300 725 292L740 295"/>
        <circle cx="916" cy="285" r="6"/><circle cx="900" cy="317" r="6"/><circle cx="932" cy="312" r="6"/>
        <path d="M735 628L705 520Q700 480 735 468L712 440Q710 430 722 428L760 420Q772 425 768 455Q805 465 812 495M712 522L875 480L905 590Q915 640 890 645L780 665M860 488L890 600Q895 635 875 640M808 475Q800 430 840 415Q885 410 880 475M815 465Q825 462 835 468M820 435Q830 432 838 440M732 430L738 455M750 425L755 452M682 580L700 577Q690 620 725 632Q780 640 808 615Q810 625 800 640Q770 680 725 675Q680 650 682 580ZM695 600Q710 650 750 652Q785 650 800 635"/>
        <use href="#cloud" x="407" y="508" width="118" height="80"/>
        <circle cx="248" cy="726" r="110"/>
        <path d="M238 711L280 738L268 780L225 788L198 745ZM200 650L240 668L285 652L275 625M215 625L200 650M340 680L318 682L320 725L342 752L358 715M150 680L165 675L162 720L145 745M160 780L195 800L210 825M280 825L295 805L332 782M275 622Q330 610 367 597Q340 620 343 645Q370 650 455 625Q380 670 375 690Q370 730 440 715Q400 760 355 772"/>
        <use href="#spark" x="453" y="637" width="90" height="88"/>
        <path d="M610 720Q612 705 630 700L645 690L655 697L680 685Q692 690 700 720Q700 735 685 740L640 760Q628 758 622 745ZM745 718Q760 730 758 742Q745 755 762 770L765 785"/>
        <use href="#bolt" x="892" y="650" width="80" height="110"/>
        <path d="M425 795Q430 785 520 792Q620 810 618 830L607 890Q590 895 570 893M425 795L413 850Q415 860 425 865L428 900M425 795Q430 820 520 832Q600 840 618 830M425 868Q490 895 560 893"/>
        <path d="M727 865L722 803L780 800M735 870L800 788L890 850M735 870L880 855M735 905Q700 900 702 880Q735 860 750 895M782 900V895L848 890"/>
        <circle cx="897" cy="873" r="25"/><circle cx="905" cy="920" r="24"/><circle cx="912" cy="967" r="24"/>
        <path d="M1002 945L935 1038H1002"/>
        <path d="M273 880Q310 885 365 860L362 878L340 900M273 880L300 895"/>
        <path d="M28 710L70 705Q80 708 82 720L105 898L0 913M28 760L42 755L46 778L28 780ZM22 797L46 793L50 815L25 818ZM8 905L0 860L32 850L42 905"/>
        <path d="M92 960L88 935Q95 918 105 935L102 960L128 952Q140 962 128 970L108 975L122 998Q118 1012 108 1000L95 985L75 1002Q62 1005 65 992L82 972L58 960Q52 945 65 945Z"/>
        <path d="M12 1120C0 1080 40 1050 75 1065Q100 1030 150 1045Q190 1050 195 1085Q250 1085 248 1130Q275 1150 270 1200Q265 1220 230 1218M75 1065L100 1085M248 1130Q240 1145 230 1145M47 1200C30 1140 80 1100 125 1108Q185 1120 180 1190M55 1190Q60 1130 115 1128Q175 1140 178 1200Q170 1250 130 1265Q80 1270 62 1215M80 1180Q90 1165 105 1175M135 1165Q145 1155 155 1165M108 1205Q125 1210 130 1203M135 1225Q150 1220 148 1212M60 1200Q35 1205 42 1235Q55 1250 65 1235M182 1185Q205 1180 205 1205Q200 1225 180 1215M268 1210L318 1460Q320 1480 305 1488L0 1540M230 1220L250 1360M255 1380L280 1490M30 1330L80 1280M30 1420L112 1412L135 1512M112 1412H160M200 1420Q230 1470 215 1495L185 1502M48 1340Q20 1380 48 1420"/>
        <path d="M327 1072L362 1098L335 1132L300 1105ZM348 1200L392 1235L352 1272L318 1240ZM318 1220Q305 1200 320 1192Q340 1190 343 1205"/>
        <use href="#bolt" x="470" y="1075" width="80" height="110"/>
        <path d="M735 1067L718 1140Q680 1145 668 1190Q660 1220 680 1235M775 1067L765 1100L758 1120L752 1150Q790 1165 782 1200Q780 1250 740 1250L690 1240"/>
        <circle cx="718" cy="1217" r="14"/><circle cx="651" cy="1273" r="12"/>
        <path d="M640 1265L690 1225M660 1280L712 1230"/>
        <path d="M640 1270C600 1250 540 1290 520 1310C460 1350 420 1370 415 1430C420 1500 480 1550 540 1555C620 1550 660 1490 665 1400Q690 1340 670 1300L655 1288M655 1288Q665 1310 650 1350Q635 1380 632 1430C630 1500 580 1530 540 1530C480 1530 440 1500 427 1450"/>
        <circle cx="510" cy="1434" r="60"/>
        <path d="M490 1470Q510 1478 530 1470M502 1405Q510 1430 530 1420M515 1395Q535 1390 540 1410M560 1430Q575 1435 585 1418M560 1440L582 1455M542 1315Q550 1335 565 1330M543 1345Q550 1365 575 1360M582 1335Q588 1355 602 1355M460 1390L475 1400M475 1380L485 1392"/>
        <path d="M805 1275L765 1395L775 1402L745 1470L765 1468L742 1530Q755 1540 775 1515Q790 1545 810 1520Q830 1545 850 1515Q870 1540 885 1510Q905 1530 925 1520L915 1500Q940 1510 955 1498L890 1405L905 1408L880 1378L890 1380L822 1285Q812 1270 805 1275M790 1395Q795 1415 805 1415Q815 1415 815 1395M832 1455Q840 1480 860 1470Q865 1485 880 1475M865 1450Q875 1470 888 1465M832 1525L835 1568M872 1525L885 1568"/>
        <path d="M1002 1175Q930 1220 933 1280L945 1305L1002 1310M950 1215Q960 1270 1002 1290M975 1195Q980 1240 1002 1255M945 1305L1002 1380M990 1370L1002 1440M70 1535L110 1568M640 1568L655 1542L670 1568"/>
      </g>

      <!-- bottom centre -->
      <g transform="translate(300 1200) scale(.3333)">
        <circle cx="293" cy="217" r="24"/><circle cx="270" cy="294" r="15"/><circle cx="821" cy="183" r="15"/>
        <circle cx="905" cy="227" r="24"/><circle cx="411" cy="776" r="15"/><circle cx="709" cy="748" r="24"/>
        <circle cx="682" cy="126" r="44"/><circle cx="694" cy="144" r="4"/>
        <path d="M695 97Q715 110 708 130M565 60C560 120 570 140 600 160C640 210 670 215 695 215C750 215 775 190 772 160C760 120 770 100 788 60"/>
        <path d="M410 155C380 100 320 100 320 130C320 160 360 170 410 168C380 150 350 220 345 240C360 260 390 230 410 185C405 220 400 250 425 258C440 250 440 200 430 185C450 220 490 215 487 190C480 165 450 165 435 165C480 165 515 150 510 115C490 90 450 130 425 150C450 120 465 80 450 65C430 60 410 110 410 155"/>
        <path d="M435 200Q465 250 462 330M455 210Q505 260 510 330M258 383Q300 310 370 312Q410 315 430 342M370 383Q420 330 480 330Q540 335 590 383M245 60Q275 140 230 240Q180 320 205 383M180 60L197 97"/>
        <use href="#spark" x="545" y="215" width="92" height="90"/>
        <path d="M655 325Q680 260 755 237Q790 235 830 262Q875 280 878 312Q900 340 890 370L870 383M650 383Q645 350 655 325L735 375M690 275L750 360Q765 365 770 350L760 240M830 265L810 345Q780 340 770 350M878 312L845 350L860 370V383M845 350L810 345"/>
        <path d="M1018 217L1068 250Q1075 260 1072 275L1050 303Q1040 305 1030 300L980 265Z"/><circle cx="1030" cy="264" r="5"/>
        <path d="M945 375Q945 355 965 352L1000 350V383M980 352V383"/>
        <path d="M872 60L885 175L1080 149M902 60L905 72L925 68V60M1010 60L1025 155M930 110L962 105L968 160M930 110L938 165M958 60L960 66L980 62"/>
        <path d="M40 750Q100 810 200 790M100 750L180 816M180 750L195 816M220 750L280 816M325 750L300 816M470 750L460 816M610 750Q520 800 500 816M790 755L900 816M880 750L890 816M1030 752Q1050 790 1090 790"/>
      </g>

      <!-- bottom left -->
      <g transform="translate(0 1200) scale(.3333)">
        <circle cx="271" cy="82" r="15"/><circle cx="168" cy="335" r="24"/><circle cx="307" cy="347" r="24"/>
        <circle cx="489" cy="366" r="32"/><circle cx="563" cy="326" r="15"/><circle cx="919" cy="260" r="24"/>
        <circle cx="14" cy="570" r="14"/><circle cx="953" cy="767" r="23"/><circle cx="237" cy="812" r="14"/>
        <path d="M14 100L10 40L70 32M14 100L85 20L185 88M14 100L185 88M14 245L195 232M40 130L70 132M38 160L75 155M45 205L80 200M70 140L130 128L142 195L82 207ZM140 130L170 120M145 190L180 188"/>
        <circle cx="185" cy="110" r="25"/><circle cx="192" cy="157" r="25"/><circle cx="198" cy="204" r="25"/>
        <circle cx="12" cy="130" r="25"/><circle cx="20" cy="178" r="25"/><circle cx="28" cy="226" r="25"/>
        <path d="M223 275L380 65L435 150L490 60M223 275H835Q790 240 710 258Q600 210 527 275M318 155L360 135Q355 175 370 180Q385 175 385 130L415 145M465 95L490 105Q490 135 505 138Q518 130 522 92L560 115M540 60L570 115M545 135Q535 160 565 168L690 95L805 170Q840 175 837 145L715 60M545 135L655 60M603 155V238M780 158V248M658 152H724V216H658ZM691 152V216M658 184H724M612 60V85M762 80L768 60M815 115Q835 75 865 60"/>
        <path d="M912 87C850 100 860 180 925 188C970 185 982 145 975 132C930 150 900 120 912 87ZM1010 60C1040 90 1050 130 1025 190C980 280 975 330 980 383M1083 60L1097 95M1100 155L1083 215M1062 262L1043 322"/>
        <path d="M422 318Q398 345 408 383M615 383Q645 345 690 342Q740 350 765 383"/>
        <path d="M672 340q-25 0-30-15q20-8 30 8q-20-18-10-28q14 0 14 26q0-30 18-30q8 10-12 30q20-18 26-4q-4 12-24 10q20 4 14 16q-14 4-20-14q4 24-8 26q-10-6-4-28q-10 22-24 18q-4-14 22-20"/>
        <use href="#spark" x="802" y="318" width="88" height="88"/>
        <path d="M30 290L60 298L55 320L45 330L52 345L42 355L50 395Q75 410 68 450Q60 490 25 492L5 488M30 290Q15 290 8 383"/>
        <circle cx="5" cy="458" r="14"/>
        <path d="M105 525Q90 510 80 530L45 648L55 652L35 715L50 712L28 775Q45 785 70 760Q90 790 105 762Q125 790 145 760Q160 780 175 760L205 765V750M75 640Q80 660 95 660L102 640M118 780L122 816M160 775L172 816M340 750Q400 770 390 816M400 750Q470 770 480 816M330 760L385 790L350 800L390 816M525 750Q540 770 580 780L700 816M620 770L655 785L665 765M620 770L635 750M665 775L658 750M770 750L900 816M980 750L1020 770L1075 750M1000 760L1100 816"/>
      </g>
    </svg>

    <div class="message sent">
      <p>hello there</p>
      <span class="meta">00.22 <svg class="ticks"><use href="#ticks"/></svg></span>
      <svg class="tail"><use href="#tail"/></svg>
    </div>

    <div class="message received roomy narrow">
      <div class="text">
        <p>Halo kak Dodo! Aku Kang Ngupi yang siap bantu<br>pesanan, komplain, dan reservasi ya <svg class="emoji"><use href="#smile"/></svg> Mau<br>pesan apa nih?</p>
      </div>
      <span class="meta">00.23</span>
      <svg class="tail"><use href="#tail"/></svg>
    </div>

    <div class="message sent">
      <p>lets use english for now</p>
      <span class="meta">00.24 <svg class="ticks"><use href="#ticks"/></svg></span>
      <svg class="tail"><use href="#tail"/></svg>
    </div>

    <div class="message received wide">
      <div class="text">
        <p>Absolutely, kak — I’ll use English from now on <svg class="emoji"><use href="#thumbs-up"/></svg><br>What can I help you with?</p>
      </div>
      <span class="meta">00.24</span>
      <svg class="tail"><use href="#tail"/></svg>
    </div>

    <div class="message sent">
      <p>i want 1 caffee latte please</p>
      <span class="meta">00.24 <svg class="ticks"><use href="#ticks"/></svg></span>
      <svg class="tail"><use href="#tail"/></svg>
    </div>

    <div class="message received widest">
      <div class="text">
        <p>Got it kak, 1 Caffè Latte ya <svg class="emoji"><use href="#coffee"/></svg></p>
        <ul class="order">
          <li>Atas name: Dodo</li>
          <li>Caffè Latte x1 — Rp23.000</li>
        </ul>
        <p>Total: Rp23.000</p>
        <p class="spaced">Is that right? Or want to add Dimsum (Rp17K) too?<br><svg class="emoji"><use href="#yum"/></svg></p>
      </div>
      <span class="meta">00.24</span>
      <svg class="tail"><use href="#tail"/></svg>
    </div>

    <div class="message sent">
      <p>yea thats right</p>
      <span class="meta">00.24 <svg class="ticks"><use href="#ticks"/></svg></span>
      <svg class="tail"><use href="#tail"/></svg>
    </div>

    <div class="message received roomy">
      <div class="text">
        <p>Got it — the shop’s closed right now, but I can<br>note the order and we’ll process it once we open<br>in the morning <svg class="emoji"><use href="#smile"/></svg></p>
        <p class="spaced">Dine-in again, pickup, or delivery, kak?</p>
      </div>
      <span class="meta">00.25</span>
      <svg class="tail"><use href="#tail"/></svg>
    </div>

    <div class="message sent">
      <p>delivery</p>
      <span class="meta">00.25 <svg class="ticks"><use href="#ticks"/></svg></span>
      <svg class="tail"><use href="#tail"/></svg>
    </div>

    <div class="row">
      <div class="message received">
        <div class="text">
          <p>Nice, delivery it is kak <svg class="emoji"><use href="#scooter"/></svg></p>
          <p class="next">Please send your location first ya, so I can check<br>the Go Ngupi delivery fee.</p>
        </div>
        <span class="meta">00.25</span>
        <svg class="tail"><use href="#tail"/></svg>
        <button class="more" type="button" aria-label="Message options">
          <svg viewBox="0 0 16 10"><path d="M2 2L8 8L14 2"/></svg>
        </button>
      </div>
      <button class="react" type="button" aria-label="React">
        <svg viewBox="0 0 28 28">
          <circle cx="14" cy="14" r="14" fill="#a9abaa"/>
          <circle cx="10" cy="11" r="1.6" fill="#444547"/>
          <circle cx="18" cy="11" r="1.6" fill="#444547"/>
          <path d="M6 15H22Q21 22 14 23Q7 22 6 15Z" fill="#444547"/>
          <path d="M8.500 17H19.500" stroke="#a9abaa" stroke-width="1.600"/>
        </svg>
      </button>
    </div>
  </main>
</div>

</body>
</html>
```
FILE: styles.css
```css
* {
  box-sizing: border-box;
}

body {
  margin: 0;
  background: #0a0a0a;
  color: #fafafa;
  font-family: Inter, "Open Sans", sans-serif;
  font-size: 25px;
  font-weight: 500;
  line-height: 32px;
}

p, ul, h1 {
  margin: 0;
}

button {
  border: none;
  padding: 0;
  cursor: pointer;
}

.sprites {
  position: absolute;
}

/* sliver of the window behind */
.backdrop {
  height: 2px;
  background:
    repeating-linear-gradient(90deg, #999 0 4px, transparent 4px 11px) 100px 0 / 195px 1px no-repeat,
    linear-gradient(90deg, #2fa8e0, #4a3fd0) 526px 0 / 32px 1px no-repeat,
    repeating-linear-gradient(90deg, #999 0 4px, transparent 4px 11px) 576px 0 / 386px 1px no-repeat,
    #0a0a0a;
}

.window {
  display: flex;
  flex-direction: column;
  min-height: calc(100vh - 2px);
  border-left: 2px solid #353636;
  border-top-right-radius: 22px;
  overflow: hidden;
}

.topbar {
  display: flex;
  align-items: center;
  height: 105px;
  padding: 0 31px 2px 40px;
  background: #252726;
  border-top: 2px solid #5c5e5d;
  border-bottom: 1px solid #3a3c3b;
  border-top-right-radius: 22px;
}

.avatar {
  width: 72px;
  height: 72px;
}

.contact {
  flex: 1;
  padding-top: 4px;
  margin-left: 15px;
  font-size: 28px;
  font-weight: 700;
}

.call {
  width: 37px;
  height: 37px;
  background: none;
}

.call svg {
  display: block;
  fill: none;
  stroke: #b0b2b1;
  stroke-width: 6;
  stroke-linecap: round;
  stroke-linejoin: round;
}

.chat {
  position: relative;
  flex: 1;
  display: flex;
  flex-direction: column;
  align-items: flex-start;
  gap: 26px;
  padding: 5px 31px 22px 33px;
  overflow: hidden;
}

.wallpaper {
  position: absolute;
  top: 0;
  left: 0;
  width: 100%;
  height: 100%;
  fill: none;
  stroke: #222323;
  stroke-width: 2;
  stroke-linecap: round;
  stroke-linejoin: round;
}

.doodle * {
  vector-effect: non-scaling-stroke;
}

/* bubbles */
.message {
  position: relative;
  isolation: isolate;
  padding: 12px 19px;
  border-radius: 26px;
}

.sent {
  display: flex;
  align-items: flex-end;
  align-self: flex-end;
  gap: 25px;
  background: #274a39;
}

.received {
  display: grid;
  grid-template-columns: minmax(0, 1fr);
  width: 634px;
  background: #252726;
}

.narrow {
  width: 630px;
}

.wide {
  width: 640px;
}

.widest {
  width: 644px;
}

.roomy {
  padding-top: 14px;
}

.received > .text,
.received > .meta {
  grid-area: 1 / 1;
}

.text {
  white-space: nowrap;
}

.meta {
  display: flex;
  align-items: center;
  align-self: end;
  justify-self: end;
  gap: 7px;
  font-size: 22px;
  line-height: 22px;
  color: #9b9d9c;
}

.sent .meta {
  color: #9db0a6;
}

.ticks {
  flex: none;
  width: 29px;
  height: 20px;
  fill: none;
  stroke: #64b5e6;
  stroke-width: 8;
  stroke-linecap: round;
  stroke-linejoin: round;
}

/* sits under the text, over the bubble's own corner */
.tail {
  position: absolute;
  bottom: 0;
  z-index: -1;
  width: 36px;
  height: 30px;
}

.received .tail {
  left: -12px;
  fill: #252726;
}

.sent .tail {
  right: -12px;
  fill: #274a39;
  transform: scaleX(-1);
}

.emoji {
  width: 34px;
  height: 30px;
  vertical-align: -6px;
}

.order {
  margin: 42px 0 8px;
  padding-left: 32px;
}

.spaced {
  margin-top: 36px;
}

.next {
  margin-top: 2px;
}

.row {
  display: flex;
  align-items: center;
  gap: 17px;
}

.more {
  position: absolute;
  top: 12px;
  right: 13px;
  display: flex;
  align-items: center;
  justify-content: center;
  width: 36px;
  height: 33px;
  border-top: 1px solid #777;
  border-radius: 9px;
  background: #555756;
}

.more svg {
  width: 16px;
  height: 10px;
  fill: none;
  stroke: #dfe6ee;
  stroke-width: 2;
  stroke-linecap: round;
  stroke-linejoin: round;
}

.react {
  position: relative;
  display: flex;
  align-items: center;
  justify-content: center;
  width: 64px;
  height: 64px;
  border-radius: 50%;
  background: #444547;
}

.react svg {
  width: 28px;
  height: 28px;
}
```
